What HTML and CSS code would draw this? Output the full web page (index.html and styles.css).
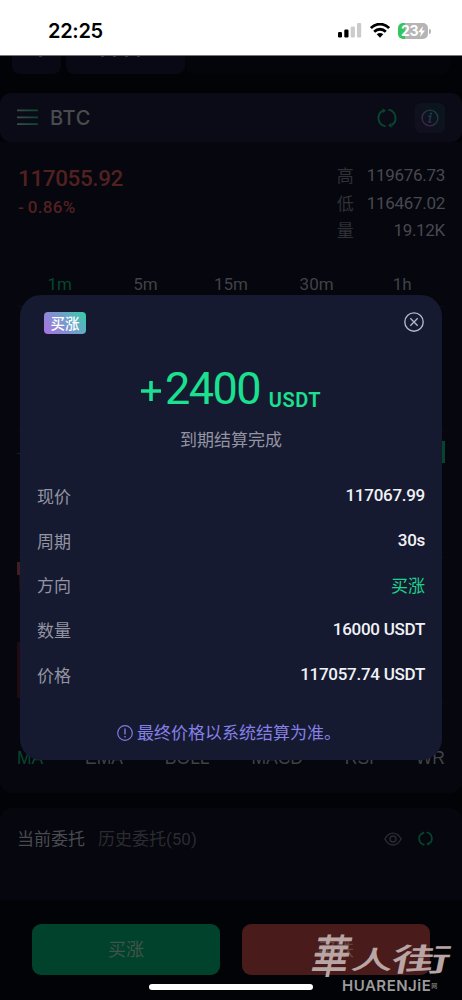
FILE: index.html
```
<!DOCTYPE html>
<html lang="zh-CN">
<head>
<meta charset="utf-8">
<meta name="viewport" content="width=device-width">
<title>BTC</title>
<link rel="stylesheet" href="styles.css">
</head>
<body>
<div class="phone">
  <header class="status">
    <span class="clock">22:25</span>
    <div class="status-icons">
      <svg width="24" height="15" viewBox="0 0 24 15"><rect x="0" y="9" width="4" height="5.5" rx="1.2"/><rect x="6.3" y="6.5" width="4.2" height="8" rx="1.2"/><rect x="12.7" y="3.5" width="4.2" height="11" rx="1.2" fill="#cbcbcb"/><rect x="19" y="0" width="4.2" height="14.500" rx="1.2" fill="#cbcbcb"/></svg>
      <svg class="wifi" width="20" height="15" viewBox="0 0 20 15"><g fill="none" stroke="#000" stroke-width="2.800"><path d="M.9 5.100C6-.2 14-.2 19.100 5.100"/><path d="M4.200 8.700C7.500 5.400 12.500 5.400 15.800 8.700"/></g><path d="M6.700 11.300Q10 8.500 13.300 11.300L10 14.700Z"/></svg>
      <div class="battery"><span>23</span><svg width="7" height="11" viewBox="0 0 7 11"><path d="M5 0L0 6.200H3L2 11L7 4.500H4Z" fill="#fff"/></svg></div><i class="battery-cap"></i>
    </div>
  </header>

  <nav class="tabs"><div class="tab back"><i></i></div><div class="tab mode"><i></i><i></i><i></i><i></i></div><div class="tab rest"></div></nav>

  <section class="pair">
    <svg width="21" height="17" viewBox="0 0 21 17"><defs><linearGradient id="bars"><stop stop-color="#434a4e"/><stop offset="1" stop-color="#07472f"/></linearGradient></defs><path d="M0 .5H21V2.300H0ZM0 7.500H21V9.300H0ZM0 14.300H21V16.100H0Z" fill="url(#bars)"/></svg>
    <h1>BTC</h1>
    <svg class="refresh" width="20" height="20" viewBox="0 0 20 20"><g fill="none" stroke="#07472f" stroke-width="1.900"><path d="M8.600 18.400A8.500 8.500 0 0 1 5.500 2.800"/><path d="M11.400 1.600A8.500 8.500 0 0 1 14.500 17.200"/></g><path d="M5.400.2L9 2.600L5.700 5.200ZM14.600 19.800L11 17.400L14.300 14.800Z" fill="#07472f"/></svg>
    <div class="info"><svg width="18" height="18" viewBox="0 0 18 18"><defs><linearGradient id="infoG" x1="0" y1="1" x2="1" y2="0"><stop stop-color="#41204e"/><stop offset="1" stop-color="#09483e"/></linearGradient></defs><g fill="none" stroke="url(#infoG)" stroke-width="1.400"><circle cx="9" cy="9" r="7.900"/><path d="M7.200 7.300H9.700L8.100 13H10.300" stroke-width="1.500"/></g><circle cx="10" cy="4.700" r="1.100" fill="#17414a"/></svg></div>
  </section>

  <section class="market">
    <div class="quote">
      <div class="last"><b>117055.92</b><span>-<em>0.86%</em></span></div>
      <dl><dt>高</dt><dd>119676.73</dd><dt>低</dt><dd>116467.02</dd><dt>量</dt><dd>19.12K</dd></dl>
    </div>
    <div class="periods"><span class="on">1m</span><span>5m</span><span>15m</span><span>30m</span><span>1h</span></div>
    <svg class="chart" viewBox="0 0 430 446" width="430" height="446"><path d="M2 6.500H428M2 130.500H428M2 257.500H428M2 402.500H428" stroke="#0c0d15"/><path d="M1 153.500H428" stroke="#06281d" stroke-dasharray="3 3"/><path d="M426 141H429V163H426Z" fill="#06442f"/><path d="M1 262H5V275H1Z" fill="#421e22"/><path d="M3 275H5V291H3ZM1 342H5V398H1Z" fill="#200b12"/></svg>
    <div class="indicators"><span class="on">MA</span><span>EMA</span><span>BOLL</span><span>MACD</span><span>RSI</span><span>WR</span></div>
  </section>

  <section class="orders">
    <strong>当前委托</strong><span>历史委托(50)</span>
    <svg class="eye" width="18" height="14" viewBox="0 0 18 14"><g fill="none" stroke="#2b2c31" stroke-width="1.400"><path d="M.9 7C5-.9 13-.9 17.100 7C13 14.900 5 14.900.9 7Z"/><circle cx="9" cy="7" r="3"/></g></svg>
    <svg width="15" height="15" viewBox="0 0 20 20"><g fill="none" stroke="#07452f" stroke-width="2.200"><path d="M8.600 18.400A8.500 8.500 0 0 1 5.500 2.800"/><path d="M11.400 1.600A8.500 8.500 0 0 1 14.500 17.200"/></g><path d="M5.400.2L9 2.600L5.700 5.200ZM14.600 19.800L11 17.400L14.300 14.800Z" fill="#07452f"/></svg>
  </section>

  <footer class="actions"><button class="buy">买涨</button><button class="sell">买跌</button></footer>

  <main class="modal">
    <div class="modal-top"><span class="badge">买涨</span><svg width="20" height="20" viewBox="0 0 20 20"><g fill="none" stroke="#b4b6ce" stroke-width="1.350"><circle cx="10" cy="10" r="9.200"/><path d="M6.300 6.300L13.700 13.700M13.700 6.300L6.300 13.700"/></g></svg></div>
    <div class="profit"><svg width="20" height="20" viewBox="0 0 20 20"><path d="M10 0V20M0 10H20" stroke="#1be08f" stroke-width="3.600"/></svg><b>2400</b><span>USDT</span></div>
    <p class="done">到期结算完成</p>
    <ul class="details">
      <li><span>现价</span><b>117067.99</b></li>
      <li><span>周期</span><b>30s</b></li>
      <li><span>方向</span><b class="up">买涨</b></li>
      <li><span>数量</span><b>16000 USDT</b></li>
      <li><span>价格</span><b>117057.74 USDT</b></li>
    </ul>
    <p class="note"><svg width="16" height="16" viewBox="0 0 16 16"><g fill="none" stroke="#7f7ae0" stroke-width="1.200"><circle cx="8" cy="8" r="7.300"/><path d="M8 3.500V9.500M8 11.100V12.500" stroke-width="1.400"/></g></svg><span>最终价格以系统结算为准。</span></p>
  </main>

  <i class="home-bar"></i>
  <div class="watermark">
    <div class="brush"><span>華</span><span>人</span><span>街</span></div>
    <div class="latin">HUARENJiE<small>网</small></div>
  </div>
</div>
</body>
</html>
```
FILE: styles.css
```
* { box-sizing: border-box; margin: 0; padding: 0; }
body { background: #020307; font-family: Roboto, "Noto Sans CJK SC", sans-serif; }
svg { display: block; flex: none; }
i, em { font-style: normal; }
.phone { position: relative; width: 462px; height: 1000px; overflow: hidden; background: #020307; }

.status { height: 56px; background: #fff; border-bottom: 1px solid #77777a; display: flex; justify-content: space-between; padding: 19px 31px 0 48px; }
.clock { font: 600 20px/24px Inter, sans-serif; letter-spacing: -.3px; color: #000; }
.status-icons { display: flex; padding-top: 4px; height: 20px; }
.wifi { margin-left: 8px; }
.battery { width: 30px; height: 16px; margin-left: 8px; border-radius: 5px; display: flex; align-items: center; justify-content: center; background: linear-gradient(90deg, #35c65b 7px, #b5b5b5 7px); color: #fff; font: 700 14px/16px Inter, sans-serif; letter-spacing: -.5px; }
.battery-cap { width: 2px; height: 5px; margin: 6px 0 0 1px; border-radius: 0 2px 2px 0; background: #b5b5b5; }

.tabs { height: 37px; padding: 0 12px; display: flex; }
.tab { height: 18px; display: flex; background: #080914; border-radius: 0 0 8px 8px; }
.back { width: 49px; padding-left: 27px; margin-right: 5px; }
.mode { width: 119px; padding-left: 35px; gap: 9px; }
.tab i { width: 3px; height: 1px; background: #34353b; }
.rest { flex: 1; background: #04050b; }

.pair { height: 49px; border-radius: 11px; background: #0a0b16; display: flex; align-items: center; padding: 0 17px; }
.pair h1 { flex: 1; margin-left: 12px; font: 500 20px/24px Inter, sans-serif; letter-spacing: .6px; color: #4a4b4f; }
.info { width: 30px; height: 30px; margin-left: 18px; border-radius: 6px; display: grid; place-items: center; background: linear-gradient(45deg, #130e1e, #09161d); }

.market { height: 651px; background: #05060e; border-radius: 0 0 12px 12px; padding: 19px 17px 0; }
.quote { height: 110px; display: flex; justify-content: space-between; }
.last { display: flex; flex-direction: column; padding-left: 1px; color: #52211f; }
.last b { font: 500 22.500px/35px Roboto, sans-serif; letter-spacing: -.4px; }
.last span { font: 500 17px/23px Roboto, sans-serif; }
.last em { margin-left: 4px; letter-spacing: .3px; }
dl { display: grid; grid-template-columns: 30px auto; grid-auto-rows: 27.500px; line-height: 28px; color: #484950; font-size: 17px; }
dt { line-height: 31px; color: #303137; }
dd { text-align: right; letter-spacing: -.3px; }
.periods { height: 26px; display: grid; grid-template-columns: repeat(5, 1fr); text-align: center; color: #414247; font-size: 17px; line-height: 26px; }
.on { color: #07472f; }
.chart { margin: 3px 0 0 -1px; }
.indicators { display: flex; justify-content: space-between; margin-top: 0; font: 17.500px/24px "Liberation Sans", Arial, sans-serif; color: #414247; }
.indicators .on { color: #07472f; }

.orders { margin-top: 15px; height: 92px; padding: 0 29px 31px 17px; border-radius: 12px 12px 0 0; background: #05060e; display: flex; align-items: center; font-size: 17px; line-height: 24px; color: #2b2c30; }
.orders strong { margin-right: 13px; color: #4a4b4f; font-weight: 400; }
.eye { margin: 0 16px 0 auto; }

.actions { display: grid; grid-template-columns: 188px 188px; gap: 22px; padding: 24px 32px; }
.actions button { height: 51px; border: 0; border-radius: 9px; font: 18px/51px Roboto, "Noto Sans CJK SC", sans-serif; color: #41534b; }
.actions .buy { background: #00422b; }
.actions .sell { background: #491b1b; color: #614441; }

.modal { position: absolute; left: 20px; top: 295px; width: 422px; height: 465px; border-radius: 21px; background: #161a31; padding: 17px 17px 0; display: flex; flex-direction: column; }
.modal-top { height: 22px; display: flex; justify-content: space-between; padding: 0 1px 0 7px; margin-bottom: 35px; }
.badge { width: 42px; height: 22px; border-radius: 4px; background: linear-gradient(50deg, #ad70e0, #7998d0 50%, #36cfaa); color: #fff; text-align: center; font: 500 14.500px/21px "Noto Sans CJK SC", sans-serif; }
.profit { height: 40px; display: flex; justify-content: center; color: #1be08f; }
.profit svg { margin: 12px 4px 0 0; }
.profit b { font: 400 45px/40px Roboto, sans-serif; letter-spacing: -1.600px; }
.profit span { margin: 14px 0 0 9px; font: 600 20px/34px Roboto, sans-serif; letter-spacing: .5px; }
.done { margin-top: 17px; text-align: center; font-size: 17px; line-height: 28px; color: #9294a2; }
.details { list-style: none; margin-top: 19px; }
.details li { height: 44.700px; display: flex; justify-content: space-between; align-items: center; font-size: 17px; color: #9294a2; }
.details b { color: #f1f2f6; font-weight: 500; letter-spacing: -.28px; }
.details .up { color: #1bd389; font-weight: 400; letter-spacing: 0; }
.note { margin-top: 23px; height: 28px; display: flex; align-items: center; justify-content: center; gap: 4px; padding-right: 4px; font-size: 17px; line-height: 28px; color: #8580e7; }

.home-bar { position: absolute; left: 149px; top: 984px; width: 164px; height: 6px; border-radius: 3px; background: #fff; }
.watermark { position: absolute; left: 313px; top: 930px; width: 142px; color: #b9a5a4; }
.brush { height: 49px; display: flex; align-items: flex-start; font: 500 36px/48px "Noto Sans CJK TC", serif; transform: skewX(-12deg); }
.brush span { width: 40px; transform-origin: left center; }
.brush span:nth-child(1) { font-size: 38px; transform: scaleY(1.200); }
.brush span:nth-child(2) { font-size: 42px; line-height: 56px; transform: scaleY(.6); }
.brush span:nth-child(3) { font-size: 35px; line-height: 56px; transform: scale(1.700, .9); }
.latin { padding-left: 29px; display: flex; align-items: center; font: 600 15px/14px Inter, sans-serif; letter-spacing: .5px; color: #9c9c9a; }
.latin small { font: 6px/12px "Noto Sans CJK SC", sans-serif; }
```
